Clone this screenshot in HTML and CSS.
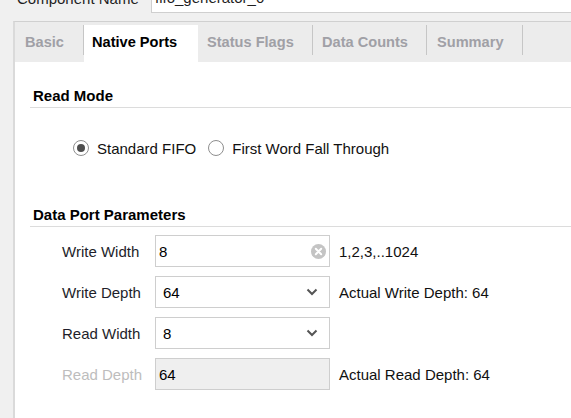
FILE: index.html
```html
<!DOCTYPE html>
<html>
<head>
<meta charset="utf-8">
<link rel="stylesheet" href="styles.css">
</head>
<body>
<div class="top-row">
  <span class="top-label">Component Name</span>
  <div class="name-input">fifo_generator_0</div>
</div>
<div class="panel">
  <div class="tabbar">
    <div class="tab sep tab-basic">Basic</div>
    <div class="tab active tab-native">Native Ports</div>
    <div class="tab sep tab-status">Status Flags</div>
    <div class="tab sep tab-data">Data Counts</div>
    <div class="tab sep tab-summary">Summary</div>
  </div>
  <div class="content">
    <div class="heading first">Read Mode</div>
    <div class="radio-row">
      <span class="radio checked"></span><span class="radio-text">Standard FIFO</span>
      <span class="radio"></span><span class="radio-text">First Word Fall Through</span>
    </div>
    <div class="heading second">Data Port Parameters</div>
    <div class="form">
      <div class="label">Write Width</div>
      <div class="field text">8<span class="clear"><svg width="15" height="15" viewBox="0 0 15 15"><circle cx="7.5" cy="7.5" r="7.5" fill="#c4c4c4"/><path d="M4.8 4.8 L10.2 10.2 M10.2 4.8 L4.8 10.2" stroke="#fff" stroke-width="2" stroke-linecap="round"/></svg></span></div>
      <div class="hint">1,2,3,..1024</div>

      <div class="label">Write Depth</div>
      <div class="field select">64<span class="chev"><svg width="12" height="8" viewBox="0 0 12 8"><path d="M1.5 1.5 L6 6 L10.5 1.5" fill="none" stroke="#555" stroke-width="2"/></svg></span></div>
      <div class="hint">Actual Write Depth: 64</div>

      <div class="label">Read Width</div>
      <div class="field select">8<span class="chev"><svg width="12" height="8" viewBox="0 0 12 8"><path d="M1.5 1.5 L6 6 L10.5 1.5" fill="none" stroke="#555" stroke-width="2"/></svg></span></div>
      <div class="hint"></div>

      <div class="label disabled">Read Depth</div>
      <div class="field text disabled-field">64</div>
      <div class="hint">Actual Read Depth: 64</div>
    </div>
  </div>
</div>
</body>
</html>
```

FILE: styles.css
```css
html, body {
  margin: 0;
  padding: 0;
}
body {
  background: #f0f0f0;
  font-family: "Liberation Sans", Arial, sans-serif;
  font-size: 15px;
  color: #1e1e1e;
  width: 571px;
  height: 418px;
  overflow: hidden;
}
.top-row {
  display: flex;
  align-items: center;
  height: 30px;
  margin-top: -17px;
  padding-left: 17px;
}
.top-label {
  width: 134px;
  flex: none;
}
.name-input {
  flex: 1;
  height: 29px;
  background: #fff;
  border-bottom: 1px solid #cfcfcf;
  border-left: 1px solid #cfcfcf;
  display: flex;
  align-items: center;
  padding-left: 3px;
}
.panel {
  margin-top: 8px;
  margin-left: 13px;
  border-left: 2px solid #dadada;
  border-top: 1px solid #d0d0d0;
  background: #fff;
  height: 396px;
}
.tabbar {
  display: flex;
  height: 40px;
  background: #ececec;
  padding-top: 3px;
  box-sizing: border-box;
}
.tab {
  display: flex;
  align-items: center;
  flex: none;
  box-sizing: border-box;
  padding: 0 0 3px 9px;
  font-weight: bold;
  font-size: 14.6px;
  color: #a0a0a6;
  white-space: nowrap;
}
.tab.sep {
  background: linear-gradient(#c6c6c6, #c6c6c6) right top / 1px 30px no-repeat;
}
.tab-basic {
  width: 69px;
  padding-left: 10px;
  background-color: #e8e8e8;
}
.tab-native {
  width: 114px;
}
.tab-status {
  width: 115px;
}
.tab-data {
  width: 114px;
}
.tab-summary {
  width: 96px;
  padding-left: 10px;
}
.tab.active {
  background: #fff;
  color: #000;
  padding-left: 8px;
}
.content {
  padding-left: 15px;
}
.heading {
  font-weight: bold;
  color: #000;
  line-height: 18px;
  padding-left: 3px;
  padding-bottom: 2px;
  border-bottom: 1px solid #dcdcdc;
}
.heading.first {
  margin-top: 25px;
}
.heading.second {
  margin-top: 49px;
}
.radio-row {
  display: flex;
  align-items: center;
  height: 18px;
  margin-top: 31px;
  margin-left: 43px;
}
.radio {
  width: 14px;
  height: 14px;
  border: 1px solid #8e8e8e;
  border-radius: 50%;
  background: #fff;
  display: flex;
  align-items: center;
  justify-content: center;
  flex: none;
}
.radio.checked::before {
  content: "";
  width: 8px;
  height: 8px;
  border-radius: 50%;
  background: #4e4e4e;
}
.radio-text {
  margin-left: 8px;
  margin-right: 12px;
  color: #111;
}
.form {
  display: grid;
  grid-template-columns: 93px 175px 1fr;
  grid-auto-rows: 32px;
  row-gap: 9px;
  margin-top: 8px;
  margin-left: 32px;
  align-items: center;
}
.label {
  color: #1e1e2a;
}
.label.disabled {
  color: #bdbdbd;
}
.field {
  height: 32px;
  box-sizing: border-box;
  border: 1px solid #cecece;
  background: #fff;
  display: flex;
  align-items: center;
  color: #000;
}
.field.text {
  padding-left: 3px;
}
.field.select {
  padding-left: 7px;
}
.field.disabled-field {
  background: #efefef;
}
.clear {
  margin-left: auto;
  margin-right: 3px;
  display: flex;
}
.chev {
  margin-left: auto;
  margin-right: 11px;
  display: flex;
}
.hint {
  padding-left: 9px;
  color: #111;
}
```
